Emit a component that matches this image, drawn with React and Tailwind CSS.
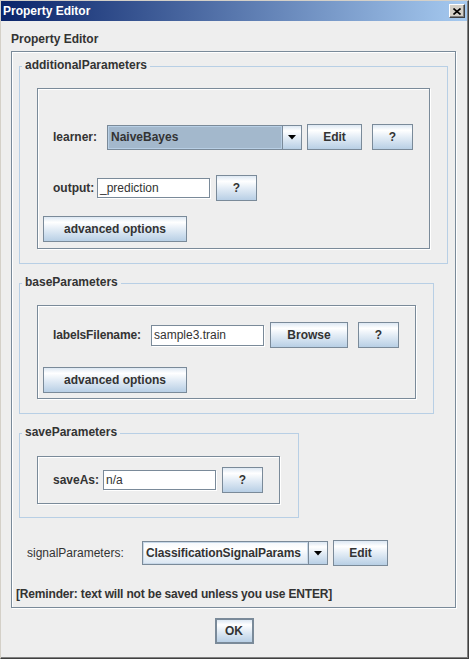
import React from "react";

const btn =
  "flex shrink-0 items-center justify-center border border-[#7a8a99] bg-[linear-gradient(180deg,#dde8f3_0%,#ffffff_22%,#e4edf6_50%,#b8cfe5_100%)] text-[12px] font-bold text-[#333333] leading-none";
const etched =
  "border border-[#7a8a99] shadow-[inset_1px_1px_0_#ffffff,1px_1px_0_#ffffff]";
const field =
  "shrink-0 border border-[#7a8a99] bg-white shadow-[1px_1px_0_#ffffff] pl-[2px] text-[12px] text-[#333333] flex items-center";

function Arrow() {
  return (
    <svg width="8" height="5" viewBox="0 0 8 5">
      <path d="M0 0 H8 L4 4.5 Z" fill="#000" />
    </svg>
  );
}

function Legend({ children }) {
  return (
    <span className="absolute left-[2px] top-[-9px] bg-[#eeeeee] px-[3px] font-bold leading-[14px] text-[#333333]">
      {children}
    </span>
  );
}

export default function App() {
  return (
    <div className="w-[469px] h-[659px] overflow-hidden border-l border-t border-r border-b border-l-[#d4d0c8] border-t-[#d4d0c8] border-r-[#404040] border-b-[#404040] bg-[#eeeeee] font-['Liberation_Sans',Arial,sans-serif] text-[12px] text-[#333333]">
      <div className="flex h-full flex-col border-r border-b border-[#808080]">
        {/* title bar */}
        <div className="flex h-[20px] shrink-0 items-center justify-between bg-[linear-gradient(to_right,#0a246a,#a6caf0)] pl-[2px] pr-[2px]">
          <span className="font-bold leading-[14px] text-white">Property Editor</span>
          <div className="flex h-[14px] w-[16px] items-center justify-center border border-t-white border-l-white border-r-[#404040] border-b-[#404040] bg-[#d4d0c8] shadow-[inset_-1px_-1px_0_#808080]">
            <svg width="8" height="7" viewBox="0 0 8 7">
              <path d="M0.5 0.5 L7.5 6.5 M7.5 0.5 L0.5 6.5" stroke="#000" strokeWidth="1.6" />
            </svg>
          </div>
        </div>

        <div className="ml-[10px] mt-[11px] font-bold leading-[14px]">Property Editor</div>

        {/* outer panel */}
        <div className={`${etched} ml-[10px] mt-[5px] flex h-[557px] w-[445px] shrink-0 flex-col pt-[14px]`}>
          {/* additionalParameters */}
          <div className="relative ml-[7px] w-[429px] border border-[#b8cfe5] pl-[17px] pt-[21px] pb-[14px]">
            <Legend>additionalParameters</Legend>
            <div className={`${etched} flex w-[393px] flex-col pt-[35px] pb-[6px]`}>
              <div className="flex h-[26px] items-center pl-[15px]">
                <span className="w-[54px] shrink-0 font-bold">learner:</span>
                <div className="flex h-[25px] w-[195px] shrink-0 border border-[#7a8a99]">
                  <div className="flex flex-1 items-center border border-[#b8cfe5] bg-[#a3b8cc] pl-[2px] font-bold">
                    NaiveBayes
                  </div>
                  <div className="flex w-[19px] items-center justify-center border-l border-[#7a8a99] bg-[linear-gradient(180deg,#dde8f3_0%,#ffffff_22%,#e4edf6_50%,#b8cfe5_100%)]">
                    <Arrow />
                  </div>
                </div>
                <div className={`${btn} ml-[5px] h-[26px] w-[55px]`}>Edit</div>
                <div className={`${btn} ml-[10px] h-[26px] w-[41px]`}>?</div>
              </div>
              <div className="mt-[25px] flex h-[26px] items-center pl-[15px]">
                <span className="w-[44px] shrink-0 font-bold">output:</span>
                <div className={`${field} h-[20px] w-[113px]`}>_prediction</div>
                <div className={`${btn} ml-[6px] h-[26px] w-[41px]`}>?</div>
              </div>
              <div className="mt-[15px] flex pl-[5px]">
                <div className={`${btn} h-[26px] w-[144px]`}>advanced options</div>
              </div>
            </div>
          </div>

          {/* baseParameters */}
          <div className="relative ml-[7px] mt-[19px] w-[415px] border border-[#b8cfe5] pl-[17px] pt-[21px] pb-[14px]">
            <Legend>baseParameters</Legend>
            <div className={`${etched} flex w-[379px] flex-col pt-[16px] pb-[5px]`}>
              <div className="flex h-[26px] items-center pl-[15px]">
                <span className="w-[98px] shrink-0 font-bold tracking-[-0.15px]">labelsFilename:</span>
                <div className={`${field} h-[21px] w-[113px]`}>sample3.train</div>
                <div className={`${btn} ml-[6px] h-[26px] w-[78px]`}>Browse</div>
                <div className={`${btn} ml-[10px] h-[26px] w-[41px]`}>?</div>
              </div>
              <div className="mt-[19px] flex pl-[5px]">
                <div className={`${btn} h-[26px] w-[144px]`}>advanced options</div>
              </div>
            </div>
          </div>

          {/* saveParameters */}
          <div className="relative ml-[7px] mt-[19px] w-[280px] border border-[#b8cfe5] pl-[17px] pt-[22px] pb-[13px]">
            <Legend>saveParameters</Legend>
            <div className={`${etched} flex w-[243px] flex-col pt-[10px] pb-[10px]`}>
              <div className="flex h-[26px] items-center pl-[15px]">
                <span className="w-[50px] shrink-0 font-bold">saveAs:</span>
                <div className={`${field} h-[20px] w-[113px]`}>n/a</div>
                <div className={`${btn} ml-[6px] h-[26px] w-[41px]`}>?</div>
              </div>
            </div>
          </div>

          {/* signalParameters */}
          <div className="ml-[15px] mt-[22px] flex h-[26px] items-center">
            <span className="w-[115px] shrink-0">signalParameters:</span>
            <div className="flex h-[24px] w-[186px] shrink-0 border border-[#7a8a99]">
              <div className="flex flex-1 items-center border border-[#c8d8e8] bg-[linear-gradient(180deg,#f6f9fc_0%,#ffffff_30%,#eef3f8_60%,#dde8f3_100%)] pl-[2px] font-bold tracking-[-0.1px]">
                ClassificationSignalParams
              </div>
              <div className="flex w-[19px] items-center justify-center border-l border-[#7a8a99] bg-[linear-gradient(180deg,#dde8f3_0%,#ffffff_22%,#e4edf6_50%,#b8cfe5_100%)]">
                <Arrow />
              </div>
            </div>
            <div className={`${btn} ml-[5px] h-[26px] w-[55px]`}>Edit</div>
          </div>

          <div className="ml-[4px] mt-[21px] font-bold leading-[14px] tracking-[-0.17px]">
            [Reminder: text will not be saved unless you use ENTER]
          </div>
        </div>

        <div className="mt-[10px] flex justify-center">
          <div className={`${btn} h-[26px] w-[39px] border-2`}>OK</div>
        </div>
      </div>
    </div>
  );
}
